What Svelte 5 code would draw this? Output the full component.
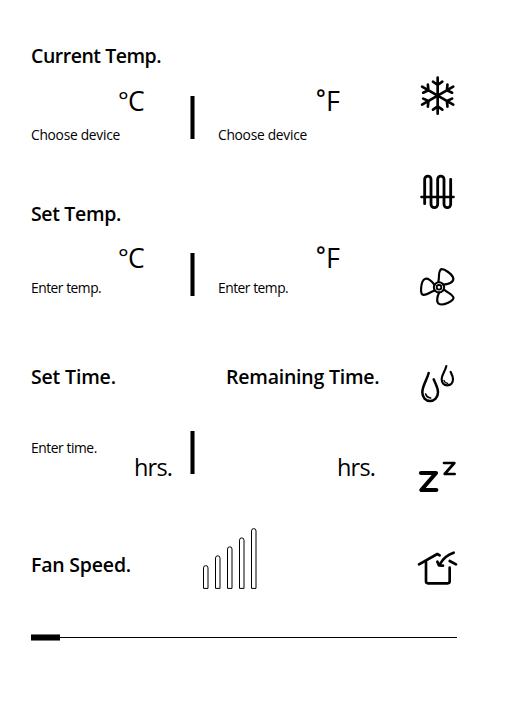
<script>
  const bars = [
    { x: 8.5, top: 45.6 },
    { x: 20.5, top: 35.8 },
    { x: 32.5, top: 26.8 },
    { x: 44.5, top: 17.9 },
    { x: 56.5, top: 8.6 },
  ];
  const arms = [0, 60, 120, 180, 240, 300];
  const blades = [0, 120, 240];
</script>

{#snippet unit(letter, kind)}
  <span class="unit {kind}"><i>°</i><b>{letter}</b></span>
{/snippet}

<main>
  <div class="panel">
    <div class="controls">
      <section class="current">
        <h2 class="h-current">Current Temp.</h2>
        <div class="row">
          <div class="cell">
            {@render unit('C', 'c')}
            <span class="label choose">Choose device</span>
          </div>
          <div class="divider"></div>
          <div class="cell right">
            {@render unit('F', 'f')}
            <span class="label choose">Choose device</span>
          </div>
        </div>
      </section>

      <section class="set">
        <h2 class="h-set">Set Temp.</h2>
        <div class="row">
          <div class="cell">
            {@render unit('C', 'c')}
            <span class="label enter">Enter temp.</span>
          </div>
          <div class="divider"></div>
          <div class="cell right">
            {@render unit('F', 'f')}
            <span class="label enter">Enter temp.</span>
          </div>
        </div>
      </section>

      <section class="time">
        <div class="heads">
          <h2 class="h-time">Set Time.</h2>
          <h2 class="h-remaining">Remaining Time.</h2>
        </div>
        <div class="row">
          <div class="cell">
            <span class="label etime">Enter time.</span>
            <span class="hrs">hrs.</span>
          </div>
          <div class="divider"></div>
          <div class="cell right">
            <span class="hrs">hrs.</span>
          </div>
        </div>
      </section>

      <section class="fan">
        <h2 class="h-fan">Fan Speed.</h2>
        <svg class="bars" width="70" height="75" viewBox="0 0 70 75">
          {#each bars as b}
            <path d="M{b.x} 68.4V{b.top + 2.3}a2.25 2.3 0 0 1 4.5 0V68.4z" />
          {/each}
        </svg>
      </section>
    </div>

    <nav>
      <svg class="snow" viewBox="0 0 180 180" stroke-width="8">
        {#each arms as a}
          <path transform="rotate({a} 83 92)" d="M83 92V38M69 50l14 10 14-10" />
        {/each}
      </svg>
      <svg viewBox="0 0 180 165" stroke-width="8.5">
        <path d="M44 116V43a9.5 9.5 0 0 1 19 0V118a10 10 0 0 0 20 0V43a9.5 9.5 0 0 1 19 0V118a10 10 0 0 0 20 0V43" />
        <path d="M34 96H131" stroke-width="7" />
      </svg>
      <svg viewBox="0 0 180 165" stroke-width="6.5">
        {#each blades as a}
          <path transform="rotate({a} 87 82)" d="M85 66C89 50 84 40 91 30C98 21 130 44 130 57C130 67 115 73 100 74" />
        {/each}
        <circle cx="87" cy="82" r="15.5" stroke-width="6" />
        <circle cx="87" cy="82" r="7" stroke-width="5.5" />
      </svg>
      <svg viewBox="0 0 180 165" stroke-width="7.5">
        <path d="M56 54C50 78 37 91 37 112C37 128 47 138 60 138C73 138 84 128 84 112C84 98 78 90 71 73" />
        <path d="M47 117C49 124 54 128 62 129" stroke-width="5" />
        <path d="M109 33C105 51 95 58 95 73C95 84 102 91 112 91C122 91 129 84 129 73C129 64 126 59 122 51" stroke-width="6.5" />
        <path d="M102 76C103 81 107 84 113 85" stroke-width="4" />
      </svg>
      <svg class="sleep" viewBox="0 0 180 165">
        <path d="M33 69H78L34 120H79" stroke-width="12.5" />
        <path d="M102 39H133L104 72H134" stroke-width="8" />
      </svg>
      <svg viewBox="0 0 180 165" stroke-width="8">
        <path d="M27 73L82 42L89 46M48 66V124Q48 130 54 130H113Q119 130 119 124V83M119 63L138 73" />
        <path d="M131 38C113 44 99 55 90 72M82 65L87 76L99 77" />
      </svg>
    </nav>
  </div>

  <div class="slider"><div class="thumb"></div></div>
</main>

<style>
  :global(body) {
    background: #fff;
  }
  main {
    box-sizing: border-box;
    width: 509px;
    height: 725px;
    padding: 42px 0 0 31px;
    overflow: hidden;
    background: #fff;
    color: #000;
    font-family: 'Open Sans', 'Noto Sans', sans-serif;
    white-space: nowrap;
  }
  .panel {
    display: flex;
    height: 592px;
  }
  .controls {
    width: 379px;
    flex: none;
  }
  section.current { height: 158px; }
  section.set { height: 163px; }
  section.time { height: 157px; }
  h2 {
    margin: 0;
    font-size: 19.5px;
    line-height: 28px;
    font-weight: 600;
  }
  .h-current { letter-spacing: -0.48px; }
  .h-set { letter-spacing: -0.35px; }
  .h-time { letter-spacing: -0.17px; }
  .h-remaining { letter-spacing: -0.22px; }
  .h-fan { letter-spacing: -0.2px; }
  .row {
    display: flex;
    align-items: flex-start;
  }
  .cell {
    display: flex;
    flex-direction: column;
    width: 159px;
    flex: none;
  }
  .right {
    margin-left: 23px;
  }
  .divider {
    width: 5px;
    height: 43px;
    flex: none;
    background: linear-gradient(to right, #777 1px, #000 1px 4px, #777 4px);
  }
  .current .row { margin-top: 13px; }
  .current .divider { margin-top: 13px; }
  .set .row { margin-top: 12px; }
  .set .divider { margin-top: 13px; }
  .current .label { margin-top: 6px; }
  .set .label { margin-top: 2px; }
  .unit {
    display: flex;
    height: 36px;
    font-size: 27px;
    line-height: 36px;
    padding-left: 87px;
  }
  .unit i {
    font-style: normal;
    font-size: 22.5px;
    font-weight: 600;
    width: 10px;
    margin-top: -2px;
  }
  .unit b {
    font-weight: 400;
    letter-spacing: -1px;
  }
  .unit.c i {
    font-size: 25px;
    font-weight: 400;
    margin-top: -1px;
  }
  .unit.c b {
    font-size: 26.5px;
  }
  .unit.f {
    padding-left: 98px;
  }
  .label {
    font-size: 13.8px;
    line-height: 20px;
  }
  .choose { letter-spacing: -0.28px; }
  .enter { letter-spacing: -0.48px; }
  .etime { letter-spacing: -0.43px; }
  .heads {
    display: flex;
  }
  .h-time {
    width: 195px;
  }
  .time .row { margin-top: 20px; }
  .time .divider { margin-top: 20px; }
  .hrs {
    font-size: 23.5px;
    line-height: 32px;
    letter-spacing: -0.8px;
    padding-left: 103px;
  }
  .time .row .label { margin-top: 27px; }
  .time .cell .hrs { margin-top: -7px; }
  .time .right .hrs { margin-top: 40px; padding-left: 119px; }
  .fan {
    display: flex;
  }
  .h-fan {
    width: 164px;
    padding-top: 31px;
  }
  .bars {
    display: block;
    fill: #fff;
    stroke: #000;
    stroke-width: 1;
  }
  nav {
    display: flex;
    flex-direction: column;
    gap: 40px;
    padding-top: 23px;
  }
  nav svg {
    display: block;
    width: 60px;
    height: 55px;
    flex: none;
    fill: none;
    stroke: #000;
    stroke-linecap: round;
    stroke-linejoin: round;
  }
  nav svg.snow {
    height: 60px;
  }
  nav svg:last-child {
    margin-top: -5px;
  }
  .slider {
    display: flex;
    width: 425.5px;
    height: 7px;
    background: linear-gradient(#000, #000) 0 3px / 100% 1px no-repeat;
  }
  .thumb {
    width: 29px;
    height: 7px;
    background: linear-gradient(#777 1px, #000 1px 6px, #777 6px);
  }
</style>
